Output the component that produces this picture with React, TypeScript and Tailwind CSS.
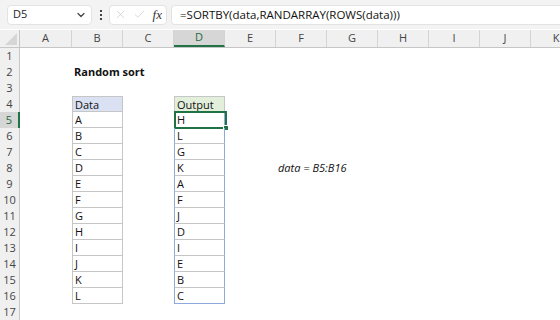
import { ChevronDown, X, Check } from "lucide-react"

const cols = ["A", "B", "C", "D", "E", "F", "G", "H", "I", "J", "K"]
const widths = [
  "w-[52px]",
  "w-[51px]",
  "w-[51px]",
  "w-[51px]",
  "w-[51px]",
  "w-[51px]",
  "w-[51px]",
  "w-[51px]",
  "w-[51px]",
  "w-[51px]",
  "w-[51px]",
]

const dataCol = ["A", "B", "C", "D", "E", "F", "G", "H", "I", "J", "K", "L"]
const outCol = ["H", "L", "G", "K", "A", "F", "J", "D", "I", "E", "B", "C"]
const rows = Array.from({ length: 17 }, (_, i) => i + 1)

function Cell({ row, col }: { row: number; col: string }) {
  const base = "h-[16px] shrink-0 box-border pl-[2px] leading-[15px] text-[11px] text-[#111] whitespace-nowrap"
  const w = widths[cols.indexOf(col)]

  if (col === "B" && row === 2) {
    return <div className={`${base} ${w} font-bold`}>Random sort</div>
  }
  if (col === "B" && row === 4) {
    return <div className={`${base} ${w} border border-[#c6c6c6] bg-[#d9e1f2]`}>Data</div>
  }
  if (col === "B" && row >= 5 && row <= 16) {
    return <div className={`${base} ${w} border-x border-b border-[#c6c6c6]`}>{dataCol[row - 5]}</div>
  }
  if (col === "D" && row === 4) {
    return <div className={`${base} ${w} border border-[#c6c6c6] bg-[#e2efda]`}>Output</div>
  }
  if (col === "D" && row >= 5 && row <= 16) {
    const last = row === 16
    return (
      <div
        className={`${base} ${w} relative border-x border-b border-x-[#8ea9db] ${last ? "border-b-[#8ea9db]" : "border-b-[#c6c6c6]"}`}
      >
        {outCol[row - 5]}
        {row === 5 && (
          <div className="absolute -left-[1px] -top-[1px] w-[53px] h-[18px] border-2 border-[#217346]">
            <div className="absolute -right-[4px] -bottom-[4px] w-[6px] h-[6px] bg-[#217346] border border-white" />
          </div>
        )}
      </div>
    )
  }
  if (col === "F" && row === 8) {
    return <div className={`${base} ${w} italic`}>data = B5:B16</div>
  }
  return <div className={`${base} ${w}`} />
}

export default function App() {
  return (
    <div className="w-[560px] h-[320px] overflow-hidden bg-white" style={{ fontFamily: "'Segoe UI', 'Open Sans', 'Noto Sans', sans-serif" }}>
      {/* formula bar */}
      <div className="h-[29px] bg-[#f3f3f3] flex items-center pl-[7px] gap-[4px]">
        <div className="w-[85px] h-[20px] bg-white rounded-[4px] border border-[#e3e3e3] flex items-center justify-between pl-[5px] pr-[4px]">
          <span className="text-[11px] text-[#222]">D5</span>
          <ChevronDown className="w-[12px] h-[12px] text-[#444]" strokeWidth={2.5} />
        </div>
        <div className="w-[9px] flex flex-col items-center gap-[2px]">
          <span className="w-[2px] h-[2px] bg-[#444]" />
          <span className="w-[2px] h-[2px] bg-[#444]" />
          <span className="w-[2px] h-[2px] bg-[#444]" />
        </div>
        <div className="w-[58px] h-[20px] bg-white rounded-[4px] border border-[#e3e3e3] flex items-center justify-between px-[4px]">
          <X className="w-[13px] h-[13px] text-[#c4c4c4]" strokeWidth={1.2} />
          <Check className="w-[13px] h-[13px] text-[#c4c4c4]" strokeWidth={1.2} />
          <span className="text-[13px] italic text-[#333] leading-none" style={{ fontFamily: "'Liberation Serif', serif" }}>fx</span>
        </div>
        <div className="flex-1 h-[20px] bg-white rounded-l-[4px] border border-r-0 border-[#e3e3e3] flex items-center pl-[8px]">
          <span className="text-[11.5px] text-[#111]">=SORTBY(data,RANDARRAY(ROWS(data)))</span>
        </div>
      </div>
      {/* column headers */}
      <div className="flex h-[18px] bg-[#f0f0f0] border-b border-[#c6c6c6] mt-[1px]">
        <div className="w-[20px] h-full shrink-0 border-r border-[#c6c6c6] flex items-end justify-end p-[2px]">
          <div className="w-0 h-0 border-l-[12px] border-l-transparent border-b-[12px] border-b-[#d6d6d6]" />
        </div>
        {cols.map((c, i) => (
          <div
            key={c}
            className={`${widths[i]} shrink-0 h-full flex items-center justify-center text-[11px] border-r border-[#d4d4d4] ${
              c === "D" ? "bg-[#d6d6d6] text-[#1e6b40] border-b-2 border-b-[#217346]" : "text-[#444]"
            }`}
          >
            {c}
          </div>
        ))}
      </div>
      {/* rows */}
      {rows.map((r) => (
        <div key={r} className="flex h-[16px]">
          <div
            className={`w-[20px] shrink-0 h-full flex items-center justify-center text-[11px] ${
              r === 5 ? "bg-[#d6d6d6] text-[#1e6b40] border-r-2 border-[#217346]" : "bg-[#f0f0f0] text-[#444] border-r border-[#c6c6c6]"
            }`}
          >
            {r}
          </div>
          {cols.map((c) => (
            <Cell key={c} row={r} col={c} />
          ))}
        </div>
      ))}
    </div>
  )
}
